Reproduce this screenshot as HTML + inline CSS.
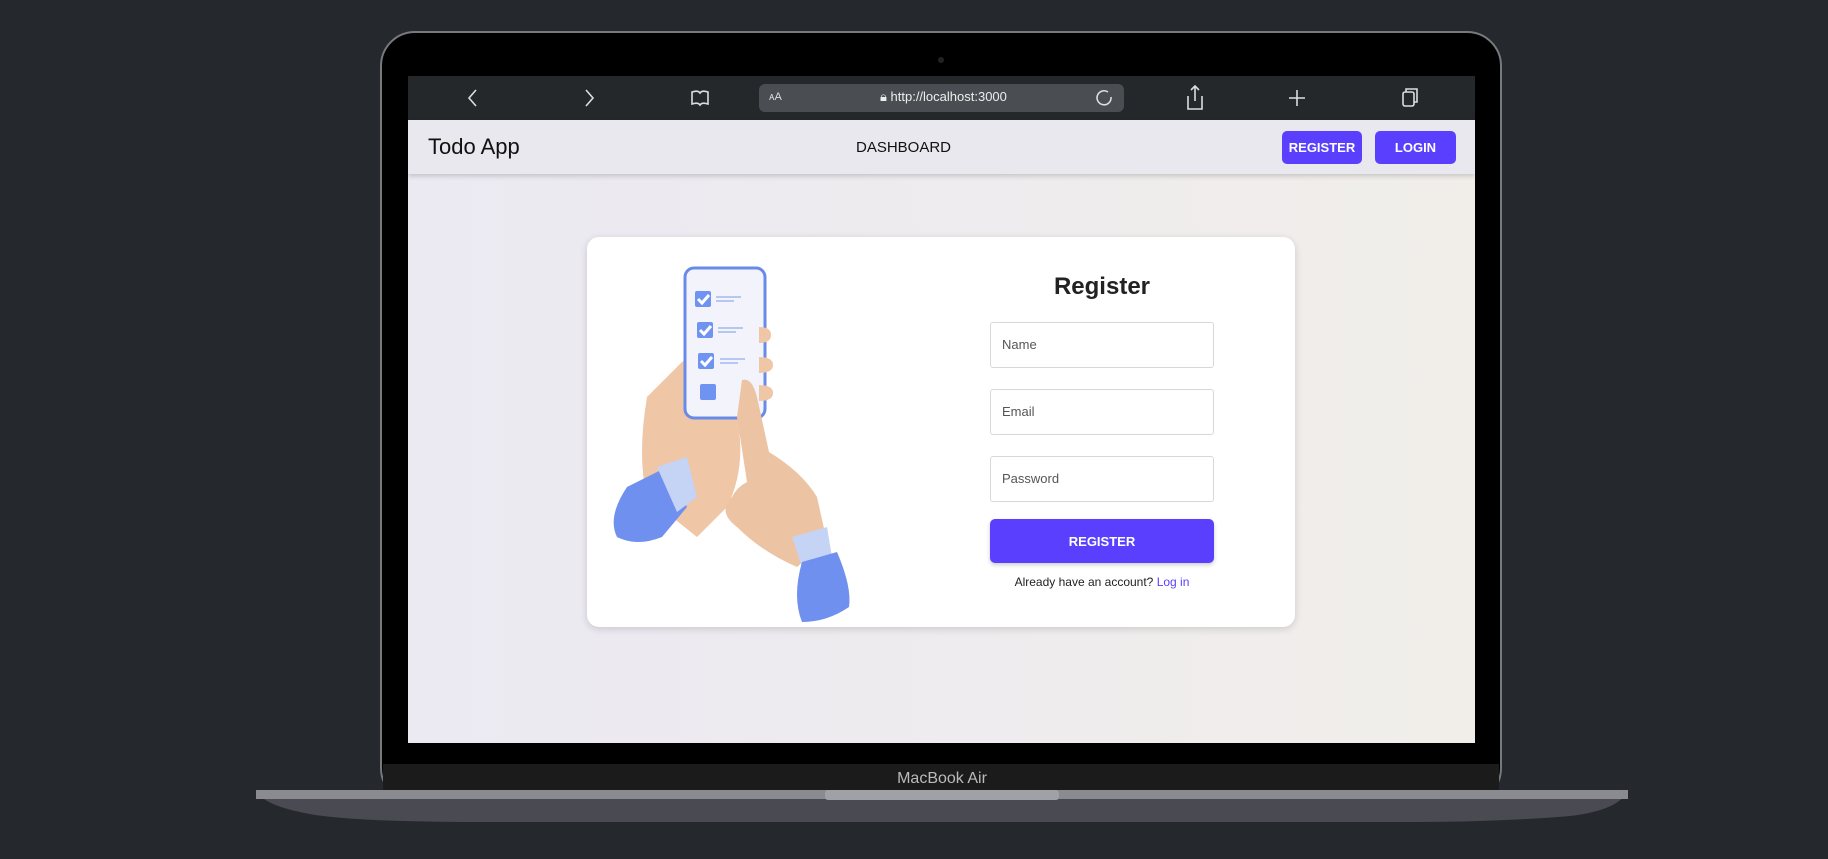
<!DOCTYPE html>
<html><head><meta charset="utf-8"><style>
*{margin:0;padding:0;box-sizing:border-box}
body{width:1828px;height:859px;background:#25292d;position:relative;overflow:hidden;font-family:"Liberation Sans",sans-serif}
.abs{position:absolute}
#screen{left:408px;top:76px;width:1067px;height:667px;background:linear-gradient(90deg,#ebe9f2,#f1eeea);overflow:hidden}
#tb{left:0;top:0;width:1067px;height:44px;background:#25282b}
#nav{left:0;top:44px;width:1067px;height:54px;background:#e9e8ee;box-shadow:0 2px 5px rgba(0,0,0,.18)}
.nb{background:#5a40fe;color:#fff;font-weight:bold;font-size:13px;border-radius:5px;display:flex;align-items:center;justify-content:center;height:33px;top:11px}
#card{left:179px;top:161px;width:708px;height:390px;background:#fff;border-radius:12px;box-shadow:0 2px 8px rgba(0,0,0,.15)}
.in{position:absolute;left:403px;width:224px;height:46px;border:1px solid #d8d8d8;border-radius:3px;font-size:13px;color:#555;padding:14px 11px}
</style></head><body>
<svg class="abs" style="left:0;top:0" width="1828" height="859">
<rect x="381" y="32" width="1120" height="770" rx="34" fill="#000" stroke="#77797e" stroke-width="2"/>
<rect x="383" y="764" width="1116" height="26" fill="#1b1b1b"/>
<path d="M256 790 L1628 790 Q1620 810 1570 816 Q1500 822 1400 822 L480 822 Q340 822 300 812 Q262 804 256 790Z" fill="#4a4b52"/>
<rect x="256" y="790" width="1372" height="9" fill="#8a8b90"/>
<rect x="825" y="790" width="234" height="10" rx="3" fill="#a0a1a6"/>
<circle cx="941" cy="60" r="3" fill="#222"/>
<text x="942" y="783" fill="#bbb" font-size="16" text-anchor="middle" font-family="Liberation Sans">MacBook Air</text>
</svg>
<div id="screen" class="abs">
<div id="tb" class="abs">
<svg width="1067" height="44" fill="none" stroke="#ddd" stroke-width="1.6">
<path d="M68 14 L61 22 L68 30"/><path d="M178 14 L185 22 L178 30"/>
<path d="M284 16 Q290 14 292 17 Q294 14 300 16 V28 Q294 26 292 29 Q290 26 284 28Z"/>
<rect x="351" y="8" width="365" height="28" rx="6" fill="#4a4d52" stroke="none"/>
<path d="M700 16 A7 7 0 1 0 703 21"/>
<path d="M780 20 V33 H794 V20 M787 10 V25 M783 14 L787 10 L791 14"/>
<path d="M889 14 V30 M881 22 H897"/>
<rect x="995" y="16" width="11" height="14" rx="2"/><path d="M998 16 V13 H1009 V26 H1006"/>
</svg>
<div class="abs" style="left:361px;top:15px;color:#ddd;font-size:11px">ᴀA</div>
<div class="abs" style="left:472px;top:13px;color:#eee;font-size:13px">🔒︎ http://localhost:3000</div>
</div>
<div id="nav" class="abs">
<div class="abs" style="left:20px;top:14px;font-size:22px;color:#111">Todo App</div>
<div class="abs" style="left:448px;top:19px;font-size:15px;color:#111">DASHBOARD</div>
<div class="abs nb" style="left:874px;width:80px">REGISTER</div>
<div class="abs nb" style="left:967px;width:81px">LOGIN</div>
</div>
<div id="card" class="abs">
<svg class="abs" style="left:0;top:0" width="330" height="390">
<path d="M60 160 Q50 220 60 260 L110 300 L140 270 Q160 230 150 180 L140 130 Q120 110 95 125 Z" fill="#efc6a6"/>
<rect x="98" y="31" width="80" height="150" rx="9" fill="#f3f4fb" stroke="#6a8ae8" stroke-width="3"/>
<g fill="#6f93f0"><rect x="108" y="54" width="16" height="16" rx="2"/><rect x="110" y="85" width="16" height="16" rx="2"/><rect x="111" y="116" width="16" height="16" rx="2"/><rect x="113" y="147" width="16" height="16" rx="2"/></g>
<g stroke="#fff" stroke-width="3" fill="none"><path d="M111 62 l4 4 l7 -8"/><path d="M113 93 l4 4 l7 -8"/><path d="M114 124 l4 4 l7 -8"/></g>
<g stroke="#b8c6f4" stroke-width="2"><path d="M129 60 h25 M129 64 h18 M131 91 h25 M131 95 h18 M133 122 h25 M133 126 h18"/></g>
<path d="M172 90 q12 0 12 8 q0 8 -12 8Z M172 120 q14 0 14 8 q0 8 -14 8Z M172 148 q14 0 14 8 q0 8 -14 8Z" fill="#efc6a6"/>
<path d="M155 143 Q165 140 170 160 L182 215 Q215 235 230 260 L240 305 L210 330 Q175 315 150 290 Q130 275 145 260 Q150 250 160 245 L150 180 Z" fill="#edc4a3"/>
<path d="M40 250 L80 230 L100 270 L75 300 Q50 310 30 300 Q20 280 40 250Z" fill="#6f90ee"/>
<path d="M70 230 L100 220 L110 260 L90 275Z" fill="#c5d3f5"/>
<path d="M205 300 L240 290 L245 320 L215 330Z" fill="#c5d3f5"/>
<path d="M215 325 L250 315 Q265 350 262 370 Q240 385 215 385 Q205 360 215 325Z" fill="#6f90ee"/>
</svg>
<div class="abs" style="left:403px;top:36px;width:224px;text-align:center;font-size:24px;font-weight:bold;color:#222">Register</div>
<div class="in" style="top:85px">Name</div>
<div class="in" style="top:152px">Email</div>
<div class="in" style="top:219px">Password</div>
<div class="abs" style="left:403px;top:282px;width:224px;height:44px;background:#5a40fe;border-radius:5px;color:#fff;font-weight:bold;font-size:13px;display:flex;align-items:center;justify-content:center;box-shadow:0 2px 4px rgba(0,0,0,.2)">REGISTER</div>
<div class="abs" style="left:383px;top:338px;width:264px;text-align:center;font-size:12px;color:#222">Already have an account? <span style="color:#5a40fe">Log in</span></div>
</div>
</div>
</body></html>
